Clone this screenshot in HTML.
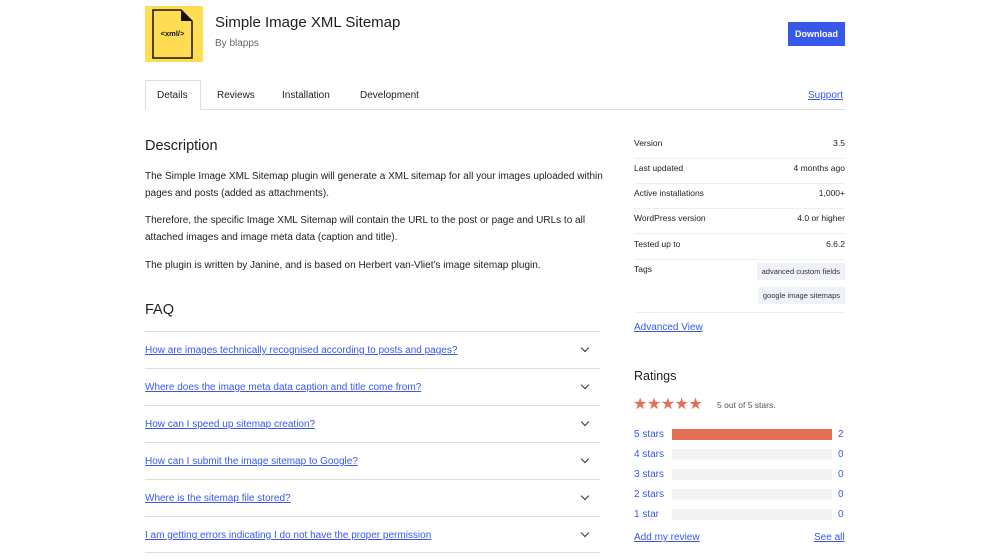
<!DOCTYPE html>
<html><head><meta charset="utf-8"><style>
*{box-sizing:border-box;margin:0;padding:0}
body{width:1000px;height:560px;overflow:hidden;background:#fff;font-family:"Liberation Sans",sans-serif;color:#1e1e1e;position:relative}
.a{position:absolute}
a{color:#3858e9}
.p{font-size:10px;color:#1e1e1e;line-height:17px}
.row{position:absolute;left:634px;width:211px;font-size:8.5px;color:#1e1e1e;border-bottom:1px solid #eee;height:25px;padding-top:4px}
.row span{float:right}
.faq{position:absolute;left:145px;width:455px;border-top:1px solid #ddd;height:37px;font-size:10px;padding-top:13px}
.faq a{text-decoration:underline}
.faq i{position:absolute;right:12px;top:13px;width:6px;height:6px;border-right:1.5px solid #333;border-bottom:1.5px solid #333;transform:rotate(45deg)}
.rl{position:absolute;left:634px;font-size:10px;color:#3858e9}
.bar{position:absolute;left:672px;width:160px;height:11px;background:#f3f3f3}
.cnt{position:absolute;left:838px;font-size:10px;color:#3858e9}
.tag{position:absolute;right:155px;background:#f0f2fa;font-size:7.5px;padding:4px 5px;color:#333}
</style></head><body>
<div class="a" style="left:145px;top:6px;width:58px;height:56px;background:#fedd55"></div>
<svg class="a" style="left:145px;top:6px" width="58" height="56"><path d="M8 4H36L47 15V52H8Z" fill="#fedd55" stroke="#111" stroke-width="1.5"/><path d="M36 4V15H47Z" fill="#111"/><text x="27.5" y="30" font-size="7.5" font-family="Liberation Sans" text-anchor="middle" font-weight="bold" fill="#111">&lt;xml/&gt;</text></svg>
<div class="a" style="left:215px;top:14px;font-size:15px">Simple Image XML Sitemap</div>
<div class="a" style="left:215px;top:38px;font-size:10px;color:#666">By blapps</div>
<div class="a" style="left:788px;top:22px;width:57px;height:24px;background:#3858e9;color:#fff;font-size:9px;font-weight:bold;text-align:center;line-height:24px">Download</div>
<div class="a" style="left:145px;top:109px;width:700px;border-top:1px solid #ddd"></div>
<div class="a" style="left:145px;top:80px;width:56px;height:30px;border:1px solid #ddd;border-bottom:1px solid #fff;background:#fff"></div>
<div class="a" style="left:157px;top:90px;font-size:10px">Details</div>
<div class="a" style="left:217px;top:90px;font-size:10px">Reviews</div>
<div class="a" style="left:282px;top:90px;font-size:10px">Installation</div>
<div class="a" style="left:360px;top:90px;font-size:10px">Development</div>
<a class="a" style="left:808px;top:90px;font-size:10px;text-decoration:underline">Support</a>
<div class="a" style="left:145px;top:138px;font-size:14.5px;font-weight:500">Description</div>
<div class="a p" style="left:145px;top:168px;width:460px">The Simple Image XML Sitemap plugin will generate a XML sitemap for all your images uploaded within pages and posts (added as attachments).</div>
<div class="a p" style="left:145px;top:212px;width:460px">Therefore, the specific Image XML Sitemap will contain the URL to the post or page and URLs to all attached images and image meta data (caption and title).</div>
<div class="a p" style="left:145px;top:257px;width:460px">The plugin is written by Janine, and is based on Herbert van-Vliet’s image sitemap plugin.</div>
<div class="a" style="left:145px;top:302px;font-size:14.5px;font-weight:500">FAQ</div>
<div class="faq" style="top:331px"><a>How are images technically recognised according to posts and pages?</a><i></i></div>
<div class="faq" style="top:368px"><a>Where does the image meta data caption and title come from?</a><i></i></div>
<div class="faq" style="top:405px"><a>How can I speed up sitemap creation?</a><i></i></div>
<div class="faq" style="top:442px"><a>How can I submit the image sitemap to Google?</a><i></i></div>
<div class="faq" style="top:479px"><a>Where is the sitemap file stored?</a><i></i></div>
<div class="faq" style="top:516px"><a>I am getting errors indicating I do not have the proper permission</a><i></i></div>
<div class="a" style="left:145px;top:552px;width:455px;border-top:1px solid #ddd"></div>
<div class="row" style="top:134px">Version<span>3.5</span></div>
<div class="row" style="top:159px">Last updated<span>4 months ago</span></div>
<div class="row" style="top:184px">Active installations<span>1,000+</span></div>
<div class="row" style="top:209px">WordPress version<span>4.0 or higher</span></div>
<div class="row" style="top:235px">Tested up to<span>6.6.2</span></div>
<div class="row" style="top:260px;height:53px">Tags</div>
<div class="tag" style="top:263px">advanced custom fields</div>
<div class="tag" style="top:287px">google image sitemaps</div>
<a class="a" style="left:634px;top:322px;font-size:10px;text-decoration:underline">Advanced View</a>
<div class="a" style="left:634px;top:369px;font-size:12.5px;font-weight:500">Ratings</div>
<div class="a" style="left:633px;top:394px;font-size:16px;color:#e26f56;letter-spacing:-0.5px">★★★★★</div>
<div class="a" style="left:717px;top:400px;font-size:8.5px;color:#555">5 out of 5 stars.</div>
<div class="rl" style="top:429px">5 stars</div><div class="bar" style="top:429px;background:#e26f56"></div><div class="cnt" style="top:429px">2</div>
<div class="rl" style="top:449px">4 stars</div><div class="bar" style="top:449px"></div><div class="cnt" style="top:449px">0</div>
<div class="rl" style="top:469px">3 stars</div><div class="bar" style="top:469px"></div><div class="cnt" style="top:469px">0</div>
<div class="rl" style="top:489px">2 stars</div><div class="bar" style="top:489px"></div><div class="cnt" style="top:489px">0</div>
<div class="rl" style="top:509px">1 star</div><div class="bar" style="top:509px"></div><div class="cnt" style="top:509px">0</div>
<a class="a" style="left:634px;top:532px;font-size:10px;text-decoration:underline">Add my review</a>
<a class="a" style="left:814px;top:532px;font-size:10px;text-decoration:underline">See all</a>
</body></html>
